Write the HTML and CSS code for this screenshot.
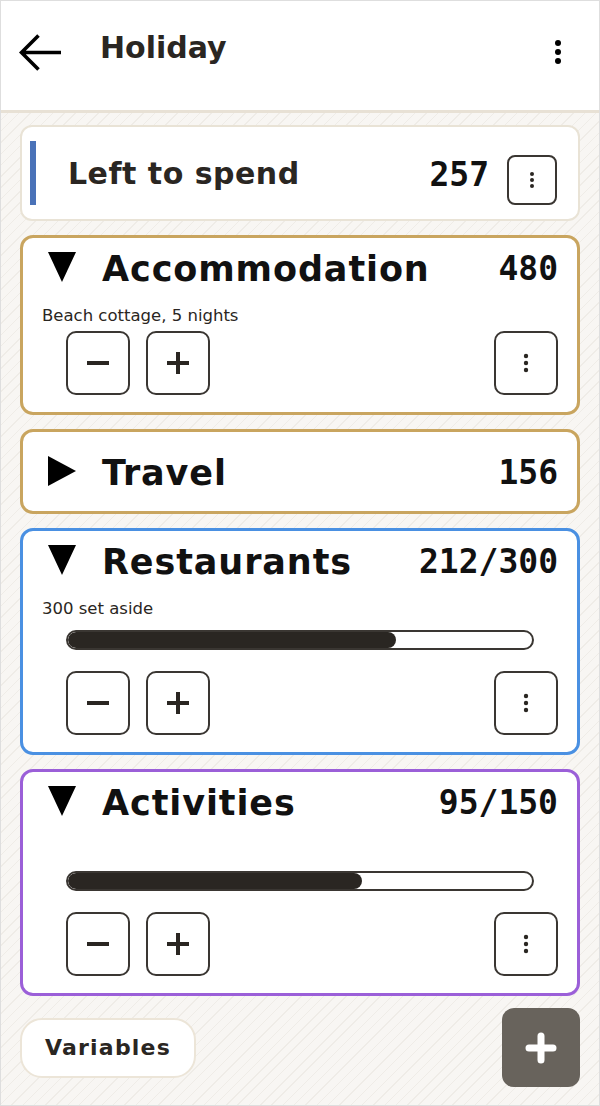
FILE: index.html
```html
<!DOCTYPE html>
<html lang="en">
<head>
    <meta charset="utf-8">
    <title>Holiday</title>
    <link rel="stylesheet" href="styles.css">
</head>
<body>
    <div class="app">
        <header class="topbar">
            <button class="icon-btn back" aria-label="Back">
                <svg width="44" height="40" viewBox="0 0 44 40">
                    <path d="M42 19.5H4 M19.5 2.5 L2.5 19.5 L19.5 36.5" fill="none" stroke="#000" stroke-width="3.6"/>
                </svg>
            </button>
            <h1 class="topbar-title">Holiday</h1>
            <button class="icon-btn menu" aria-label="More">
                <svg width="10" height="30" viewBox="0 0 10 30">
                    <circle cx="5" cy="5" r="3"/><circle cx="5" cy="14" r="3"/><circle cx="5" cy="23" r="3"/>
                </svg>
            </button>
        </header>

        <main class="main">
            <!-- what is left of the budget -->
            <section class="summary">
                <span class="summary-bar"></span>
                <span class="summary-label">Left to spend</span>
                <span class="amount">257</span>
                <button class="sq-btn sq-btn--small" aria-label="More">
                    <svg width="6" height="20" viewBox="0 0 6 20"><circle cx="3" cy="4" r="2"/><circle cx="3" cy="10" r="2"/><circle cx="3" cy="16" r="2"/></svg>
                </button>
            </section>

            <section class="budget budget--gold">
                <div class="budget-head">
                    <svg class="caret" width="28" height="30" viewBox="0 0 28 30"><polygon points="0,0 28,0 14,30"/></svg>
                    <span class="budget-name">Accommodation</span>
                    <span class="amount">480</span>
                </div>
                <div class="budget-note">Beach cottage, 5 nights</div>
                <div class="budget-actions">
                    <button class="sq-btn" aria-label="Less"><svg width="24" height="24" viewBox="0 0 24 24"><rect x="1" y="10" width="22" height="4"/></svg></button>
                    <button class="sq-btn" aria-label="More"><svg width="24" height="24" viewBox="0 0 24 24"><rect x="1" y="10" width="22" height="4"/><rect x="10" y="1" width="4" height="22"/></svg></button>
                    <button class="sq-btn sq-btn--end" aria-label="Options"><svg width="6" height="24" viewBox="0 0 6 24"><circle cx="3" cy="5" r="2.2"/><circle cx="3" cy="12" r="2.2"/><circle cx="3" cy="19" r="2.2"/></svg></button>
                </div>
            </section>

            <section class="budget budget--gold budget--closed">
                <div class="budget-head">
                    <svg class="caret" width="28" height="30" viewBox="0 0 28 30"><polygon points="0,0 28,15 0,30"/></svg>
                    <span class="budget-name">Travel</span>
                    <span class="amount">156</span>
                </div>
            </section>

            <section class="budget budget--blue">
                <div class="budget-head">
                    <svg class="caret" width="28" height="30" viewBox="0 0 28 30"><polygon points="0,0 28,0 14,30"/></svg>
                    <span class="budget-name">Restaurants</span>
                    <span class="amount">212/300</span>
                </div>
                <div class="budget-note">300 set aside</div>
                <div class="progress"><div class="progress-fill" style="width: 70.7%;"></div></div>
                <div class="budget-actions budget-actions--spaced">
                    <button class="sq-btn" aria-label="Less"><svg width="24" height="24" viewBox="0 0 24 24"><rect x="1" y="10" width="22" height="4"/></svg></button>
                    <button class="sq-btn" aria-label="More"><svg width="24" height="24" viewBox="0 0 24 24"><rect x="1" y="10" width="22" height="4"/><rect x="10" y="1" width="4" height="22"/></svg></button>
                    <button class="sq-btn sq-btn--end" aria-label="Options"><svg width="6" height="24" viewBox="0 0 6 24"><circle cx="3" cy="5" r="2.2"/><circle cx="3" cy="12" r="2.2"/><circle cx="3" cy="19" r="2.2"/></svg></button>
                </div>
            </section>

            <section class="budget budget--purple">
                <div class="budget-head">
                    <svg class="caret" width="28" height="30" viewBox="0 0 28 30"><polygon points="0,0 28,0 14,30"/></svg>
                    <span class="budget-name">Activities</span>
                    <span class="amount">95/150</span>
                </div>
                <div class="budget-note"></div>
                <div class="progress"><div class="progress-fill" style="width: 63.3%;"></div></div>
                <div class="budget-actions budget-actions--spaced">
                    <button class="sq-btn" aria-label="Less"><svg width="24" height="24" viewBox="0 0 24 24"><rect x="1" y="10" width="22" height="4"/></svg></button>
                    <button class="sq-btn" aria-label="More"><svg width="24" height="24" viewBox="0 0 24 24"><rect x="1" y="10" width="22" height="4"/><rect x="10" y="1" width="4" height="22"/></svg></button>
                    <button class="sq-btn sq-btn--end" aria-label="Options"><svg width="6" height="24" viewBox="0 0 6 24"><circle cx="3" cy="5" r="2.2"/><circle cx="3" cy="12" r="2.2"/><circle cx="3" cy="19" r="2.2"/></svg></button>
                </div>
            </section>

            <div class="footer-row">
                <button class="pill-btn">Variables</button>
                <button class="fab" aria-label="Add">
                    <svg width="32" height="32" viewBox="0 0 32 32"><path d="M16 4V28 M4 16H28" stroke="#fff" stroke-width="7" stroke-linecap="round"/></svg>
                </button>
            </div>
        </main>
    </div>
</body>
</html>
```

FILE: styles.css
```css
html, body {
    margin: 0;
    padding: 0;
}

body {
    font-family: "DejaVu Sans", "Noto Sans", sans-serif;
    color: #2a2622;
}

button {
    font-family: inherit;
    cursor: pointer;
}

.app {
    width: 600px;
    height: 1106px;
    box-sizing: border-box;
    border: 1px solid #dedede;
    background-color: #f8f6f3;
    background-image: repeating-linear-gradient(-45deg, transparent 0 7px, #efece7 7px 8px);
    overflow: hidden;
}

/* top bar */
.topbar {
    display: flex;
    align-items: center;
    height: 103px;
    background: #fff;
    border-bottom: 3px solid #e8e1d5;
    padding: 0 36px 6px 18px;
}

.icon-btn {
    border: none;
    background: none;
    padding: 0;
    display: flex;
}

.topbar-title {
    margin: 0 0 10px 37px;
    font-size: 30px;
    font-weight: 700;
    color: #2a2622;
    flex: 1;
}

.main {
    padding: 12px 19px 0;
    display: flex;
    flex-direction: column;
    gap: 14px;
}

/* summary card */
.summary {
    display: flex;
    align-items: center;
    background: #fff;
    border: 2px solid #e9e3d6;
    border-radius: 12px;
    padding: 14px 21px 14px 8px;
}

.summary-bar {
    width: 6px;
    height: 64px;
    background: #4a72b8;
}

.summary-label {
    flex: 1;
    margin-left: 32px;
    font-size: 30px;
    font-weight: 700;
    letter-spacing: 0.5px;
}

.summary .amount {
    margin-right: 18px;
    margin-top: 2px;
}

.summary .sq-btn {
    align-self: flex-end;
}

.amount {
    font-family: "DejaVu Sans Mono", "Liberation Mono", monospace;
    font-weight: 700;
    font-size: 33px;
    color: #111;
}

/* budget cards */
.budget {
    background: #fff;
    border: 3px solid #c9a55f;
    border-radius: 13px;
    padding: 5px 19px 17px;
}

.budget--closed {
    padding-top: 15px;
    padding-bottom: 16px;
}

.budget--blue {
    border-color: #4a90e2;
}

.budget--purple {
    border-color: #9b5fd8;
}

.budget-head {
    display: flex;
    align-items: center;
    height: 48px;
    padding-left: 6px;
}

.caret {
    fill: #000;
}

.budget-name {
    flex: 1;
    margin: 3px 0 0 26px;
    font-size: 35px;
    font-weight: 700;
    letter-spacing: 0.9px;
    color: #111;
}

.budget-head .amount {
    margin-top: 3px;
}

.budget-note {
    margin-top: 14px;
    height: 22px;
    line-height: 22px;
    font-size: 16.5px;
    color: #2a2622;
}

.budget-actions {
    display: flex;
    gap: 16px;
    margin: 4px 0 0 24px;
}

.budget-actions--spaced {
    margin-top: 21px;
}

.sq-btn {
    width: 64px;
    height: 64px;
    box-sizing: border-box;
    border: 2px solid #3a3632;
    border-radius: 10px;
    background: #fff;
    display: flex;
    align-items: center;
    justify-content: center;
    padding: 0;
    fill: #2a2622;
}

.sq-btn--small {
    width: 50px;
    height: 50px;
    border-radius: 8px;
}

.sq-btn--end {
    margin-left: auto;
}

.progress {
    margin: 10px 24px 0;
    height: 20px;
    box-sizing: border-box;
    border: 2px solid #3a3632;
    border-radius: 10px;
    background: #fff;
    overflow: hidden;
}

.progress-fill {
    height: 100%;
    background: #2a2622;
    border-radius: 10px;
}

/* bottom row */
.footer-row {
    display: flex;
    justify-content: space-between;
    align-items: center;
    margin-top: -2px;
}

.pill-btn {
    height: 60px;
    padding: 0 23px;
    background: #fff;
    border: 2px solid #ece5d8;
    border-radius: 22px;
    font-size: 22px;
    font-weight: 700;
    letter-spacing: 1.2px;
    color: #2a2622;
}

.fab {
    width: 78px;
    height: 79px;
    border: none;
    border-radius: 12px;
    background: #68635c;
    display: flex;
    align-items: center;
    justify-content: center;
    padding: 0;
}
```
